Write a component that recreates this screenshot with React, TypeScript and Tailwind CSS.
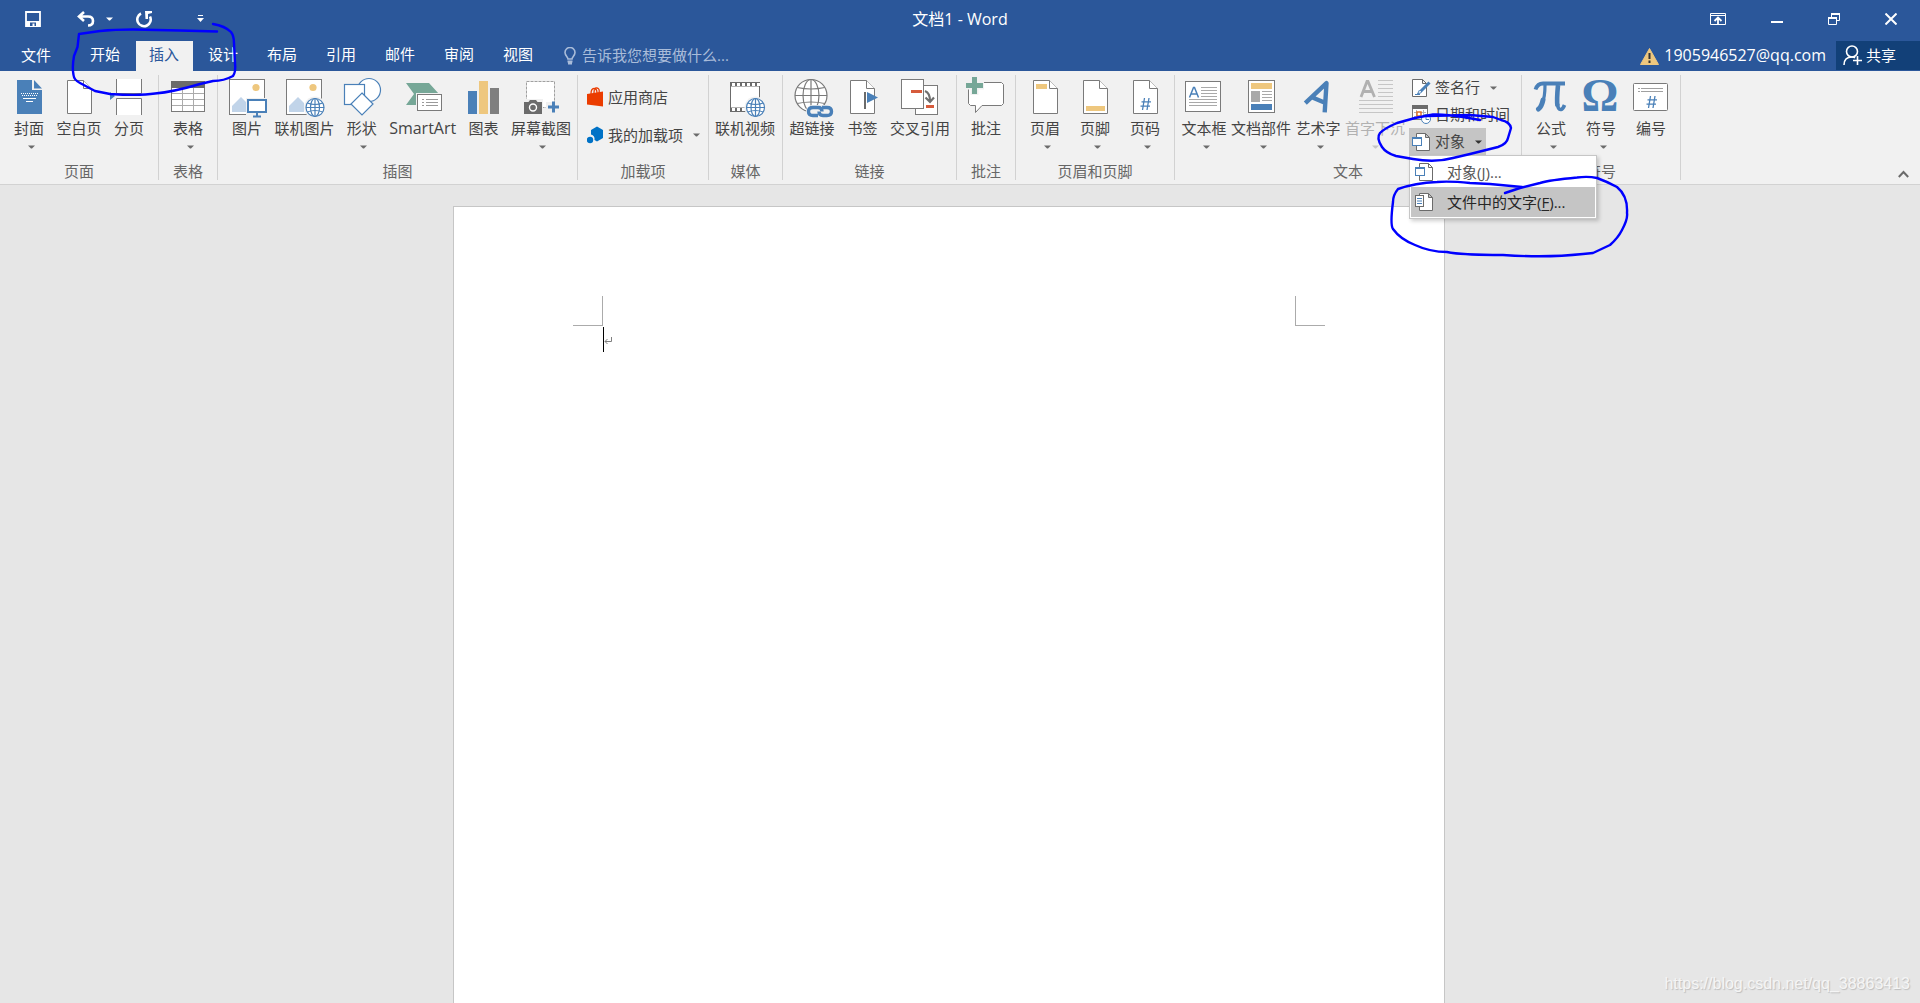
import React from "react";

const BLUE = "#4a80b8";
const GRAY = "#7a7a7a";
const GOLD = "#eec77e";

function Art({ children }: { children?: React.ReactNode }) {
  return (
    <svg viewBox="0 0 42 41" className="h-[41px] w-[42px] shrink-0 overflow-visible" fill="none" aria-hidden="true">
      {children}
    </svg>
  );
}

function Caret({ className = "text-[#6b6b6b]" }: { className?: string }) {
  return (
    <svg viewBox="0 0 7 4" className={`h-1 w-[7px] shrink-0 ${className}`} aria-hidden="true">
      <path d="M0 0.500H7L4 3.500H3Z" fill="currentColor" />
    </svg>
  );
}

function Page() {
  return (
    <g stroke={GRAY} fill="#fff">
      <path d="M9.500 3.500H25.500L33.500 11.500V36.500H9.500Z" />
      <path d="M25.500 3.500V11.500H33.500" />
    </g>
  );
}

function Globe({ x, y, r, color, bg }: { x: number; y: number; r: number; color: string; bg: string }) {
  const k = r * 0.5;
  const c = r * 0.86;
  return (
    <g stroke={color} strokeWidth="1.2">
      <circle cx={x} cy={y} r={r} fill={bg} />
      <ellipse cx={x} cy={y} rx={k} ry={r} />
      <path d={`M${x} ${y - r}V${y + r}M${x - r} ${y}H${x + r}`} />
      <path d={`M${x - c} ${y - k}Q${x} ${y - k + 3} ${x + c} ${y - k}M${x - c} ${y + k}Q${x} ${y + k - 3} ${x + c} ${y + k}`} />
    </g>
  );
}

function Picture() {
  return (
    <g>
      <rect x="3.5" y="2.500" width="35" height="35" fill="#fff" stroke={GRAY} />
      <circle cx="30" cy="10.500" r="3.600" fill={GOLD} />
      <path d="M6 35V29L15 20L21 26V35Z" fill="#c1d4e9" />
    </g>
  );
}

function Hash({ x, y }: { x: number; y: number }) {
  return (
    <path
      transform={`translate(${x} ${y})`}
      d="M4 0L2 12M8.500 0L6.500 12M1 3.800H10.500M0 8.200H9.500"
      stroke={BLUE}
      strokeWidth="1.300"
    />
  );
}

const art = {
  cover: (
    <Art>
      <path d="M9 3H24V13H34V37H9Z" fill={BLUE} />
      <path d="M26 3L34 11.500H26Z" fill={BLUE} />
      <path d="M13 16.500H30M14 18.500H30" stroke="#fff" strokeWidth="1.200" strokeDasharray="1 1" />
      <path d="M15 21.500H28M18 24.500H25" stroke="#fff" />
    </Art>
  ),
  blank: (
    <Art>
      <Page />
    </Art>
  ),
  breakPage: (
    <Art>
      <path d="M8.500 2V16.500H33.500V2M8.500 38V21.500H33.500V38" fill="#fff" stroke={GRAY} />
      <path d="M2 15L7 19L2 23Z" fill={BLUE} />
    </Art>
  ),
  table: (
    <Art>
      <rect x="4.500" y="4.500" width="33" height="30" fill="#fff" stroke={GRAY} />
      <path d="M5 16.500H37M5 22.500H37M5 28.500H37M15.500 10V34M26.500 10V34" stroke="#ababab" />
      <rect x="4" y="4" width="34" height="7" fill="#6b6b6b" />
    </Art>
  ),
  picture: (
    <Art>
      <Picture />
      <rect x="20" y="21" width="22" height="20" fill="#f1f1f1" />
      <rect x="22" y="23" width="18" height="12" fill="#fff" stroke={BLUE} strokeWidth="2" />
      <path d="M31 36V39M27 39.500H35" stroke={BLUE} strokeWidth="2" />
    </Art>
  ),
  onlinePicture: (
    <Art>
      <Picture />
      <circle cx="32" cy="30.500" r="11" fill="#f1f1f1" />
      <Globe x={32} y={30.5} r={9} color={BLUE} bg="#fff" />
    </Art>
  ),
  shapes: (
    <Art>
      <g fill="#fff" stroke={BLUE} strokeWidth="1.200">
        <circle cx="28" cy="13" r="11.500" />
        <rect x="3.500" y="7.500" width="20" height="20" />
        <path d="M21 16L32 27L21 38L10 27Z" />
      </g>
    </Art>
  ),
  smartArt: (
    <Art>
      <path d="M4 6H27L37 17L28 28H4L12 17Z" fill="#76a797" />
      <rect x="14" y="16" width="27" height="19" fill="#f1f1f1" />
      <rect x="15.500" y="17.500" width="24" height="16" fill="#fff" stroke={GRAY} />
      <path d="M20 22.500H22M24 22.500H36M20 25.500H22M24 25.500H36M20 28.500H22M24 28.500H36" stroke="#9a9a9a" />
    </Art>
  ),
  chart: (
    <Art>
      <rect x="5" y="14" width="9" height="23" fill={BLUE} />
      <rect x="16" y="4" width="9" height="33" fill={GOLD} />
      <rect x="27" y="11" width="9" height="26" fill="#7f7f7f" />
    </Art>
  ),
  screenshot: (
    <Art>
      <rect x="6.500" y="4.500" width="28" height="26" fill="#fff" stroke="#a0a0a0" strokeDasharray="3 1" />
      <path d="M3 22H23V31H26V25H41V38H3Z" fill="#f1f1f1" />
      <path d="M4 25H8.500L10 23H16L17.500 25H22V37H4Z" fill="#6b6b6b" />
      <circle cx="13" cy="30.500" r="3.500" fill="#6b6b6b" stroke="#fff" strokeWidth="1.400" />
      <path d="M28 30H39M33.500 24.500V35.500" stroke={BLUE} strokeWidth="3" />
    </Art>
  ),
  video: (
    <Art>
      <rect x="6.500" y="5.500" width="29" height="29" fill="#fff" stroke="#6b6b6b" />
      <path d="M6 7.500H36M6 32.500H36" stroke="#6b6b6b" strokeWidth="4" />
      <path d="M8 7.500H36M8 32.500H36" stroke="#fff" strokeWidth="3" strokeDasharray="3 2" />
      <circle cx="31.500" cy="30.500" r="11" fill="#f1f1f1" />
      <Globe x={31.5} y={30.5} r={9} color={BLUE} bg="#fff" />
    </Art>
  ),
  link: (
    <Art>
      <Globe x={20} y={18.5} r={16} color={GRAY} bg="#fff" />
      <rect x="15" y="28" width="28" height="14" rx="6" fill="#f1f1f1" />
      <path d="M27 38.500H22Q17.500 38.500 17.500 34.500T22 30.500H27Q31 30.500 31 34.500" stroke={BLUE} strokeWidth="3.400" />
      <path d="M31 30.500H36Q40.500 30.500 40.500 34.500T36 38.500H32Q28 38.500 28 34.500" stroke={BLUE} strokeWidth="3.400" />
    </Art>
  ),
  bookmark: (
    <Art>
      <Page />
      <path d="M24 15V32" stroke="#6b6b6b" strokeWidth="2" />
      <path d="M26 15L37 20.500L26 26Z" fill={BLUE} />
    </Art>
  ),
  crossRef: (
    <Art>
      <rect x="16.500" y="8.500" width="22" height="29" fill="#fff" stroke={GRAY} />
      <rect x="2.500" y="2.500" width="22" height="29" fill="#fff" stroke={GRAY} />
      <path d="M12 14.500H23M27 29.500H35" stroke="#d65b3c" strokeWidth="3" />
      <path d="M26 14Q31 16 31 24M26.500 20.500L31 25L35 20.500" stroke="#6f6f6f" strokeWidth="2.200" />
    </Art>
  ),
  comment: (
    <Art>
      <path d="M5.500 5.500H36.500L38.500 7.500V26.500L36.500 28.500H17L10.500 35.500V28.500H5.500L3.500 26.500V7.500Z" fill="#fff" stroke={GRAY} />
      <path d="M0 8.500H19M9.500 -1V18" stroke="#f1f1f1" strokeWidth="8" />
      <path d="M1 8.500H18M9.500 0V17" stroke="#76a797" strokeWidth="5" />
    </Art>
  ),
  header: (
    <Art>
      <Page />
      <rect x="12" y="7" width="11" height="5" fill={GOLD} />
    </Art>
  ),
  footer: (
    <Art>
      <Page />
      <rect x="12" y="29" width="19" height="5" fill={GOLD} />
    </Art>
  ),
  pageNumber: (
    <Art>
      <Page />
      <Hash x={16.5} y={21} />
    </Art>
  ),
  textBox: (
    <Art>
      <rect x="2.500" y="4.500" width="35" height="30" fill="#fff" stroke={GRAY} />
      <path d="M6.500 20.500L10.500 10.500H11.500L15.500 20.500M8 17H14" stroke={BLUE} strokeWidth="1.500" />
      <path d="M18 10.500H34M18 13.500H34M18 16.500H34M18 19.500H34M6 22.500H34M6 25.500H34M6 28.500H34" stroke="#a9a9a9" />
    </Art>
  ),
  parts: (
    <Art>
      <rect x="8.500" y="3.500" width="26" height="32" fill="#fff" stroke={GRAY} />
      <rect x="11" y="6" width="21" height="6" fill={GOLD} />
      <rect x="11" y="14" width="9" height="11" fill="#a9a9a9" />
      <path d="M22 14.500H32M22 17.500H32M22 20.500H32M22 23.500H32" stroke="#a9a9a9" />
      <rect x="11" y="27" width="21" height="6" fill={BLUE} />
    </Art>
  ),
  wordArt: (
    <Art>
      <path d="M8.300 26.200L29.500 6.200L27.700 35.300M15.500 20.500L28.500 26" stroke={BLUE} strokeWidth="4.400" strokeLinejoin="round" />
    </Art>
  ),
  dropCap: (
    <Art>
      <path d="M7 20L13 4.500H14L20.500 20M9.500 14.500H18.500" stroke="#b1b1b1" strokeWidth="2.800" />
      <path d="M24 3.500H39M24 7.500H39M24 11.500H39M24 15.500H39M24 19.500H39M5 23.500H39M5 27.500H39M5 31.500H39M5 35.500H39" stroke="#c6c6c6" />
    </Art>
  ),
  pi: (
    <Art>
      <path d="M5.500 12.500Q7.500 6.500 13 6.500H35" stroke={BLUE} strokeWidth="3.800" />
      <path d="M15 8Q15 20 12.500 25" stroke={BLUE} strokeWidth="3.200" />
      <path d="M13 23Q11.500 30 8.500 32" stroke={BLUE} strokeWidth="5" strokeLinecap="round" />
      <path d="M28 8Q26.500 24 27.500 29" stroke={BLUE} strokeWidth="4.600" />
      <path d="M27.500 27Q28 33 31 32.500Q33 32 34.500 28" stroke={BLUE} strokeWidth="3.600" />
    </Art>
  ),
  omega: (
    <Art>
      <text x="20" y="34" textAnchor="middle" fill={BLUE} className="font-['Liberation_Serif',serif] text-[46px] font-bold">
        Ω
      </text>
    </Art>
  ),
  numbering: (
    <Art>
      <rect x="3.500" y="6.500" width="34" height="27" rx="1" fill="#fff" stroke={GRAY} />
      <path d="M8 11.500H10M11 11.500H33M8 14.500H10M11 14.500H33" stroke="#a0a0a0" />
      <Hash x={16.5} y={19} />
    </Art>
  ),
};

type ToolProps = { icon: React.ReactNode; label: string; menu?: boolean; disabled?: boolean; latin?: boolean };

function Tool({ icon, label, menu, disabled, latin }: ToolProps) {
  return (
    <button
      type="button"
      disabled={disabled}
      className="flex h-20 min-w-[50px] flex-col items-center px-0.5 whitespace-nowrap text-[#444444] hover:bg-[#c5c5c5] disabled:text-[#b1b1b1]"
    >
      {icon}
      <span className={latin ? "text-[16px] leading-5" : "text-[15px] leading-5"}>{label}</span>
      {menu && <Caret className={disabled ? "mt-[7px] text-[#c6c6c6]" : "mt-[7px] ml-1 text-[#6b6b6b]"} />}
    </button>
  );
}

function Group({ title, className, children }: { title: string; className: string; children: React.ReactNode }) {
  return (
    <section aria-label={title} className={`flex h-[105px] shrink-0 flex-col border-r border-[#d2d2d2] px-1 ${className}`}>
      <div className="flex h-20 shrink-0 justify-between pt-0.5">{children}</div>
      <h2 className="mt-1.5 text-center text-[15px] leading-5 text-[#666666]">{title}</h2>
    </section>
  );
}

function PagePair({ children }: { children: React.ReactNode }) {
  return (
    <svg viewBox="0 0 18 18" className="h-[18px] w-[18px] shrink-0" aria-hidden="true">
      <path d="M4.500 0.500H13.500L17.500 4.500V17.500H4.500Z M13.500 0.500V4.500H17.500" stroke="#6b6b6b" fill="#fff" />
      {children}
    </svg>
  );
}

const objectIcon = (
  <PagePair>
    <rect x="0.500" y="4.500" width="9" height="8" stroke={BLUE} fill="#fff" />
    <path d="M0 5H10" stroke={BLUE} strokeWidth="2" />
  </PagePair>
);

const fileTextIcon = (
  <PagePair>
    <rect x="0.500" y="2.500" width="8" height="11" stroke="#6b6b6b" fill="#fff" />
    <path d="M2 5.500H7M2 8H7M2 10.500H7" stroke={BLUE} />
  </PagePair>
);

function MenuItem({ icon, label, accel, active }: { icon: React.ReactNode; label: string; accel: string; active?: boolean }) {
  return (
    <button
      type="button"
      role="menuitem"
      className={`flex h-[30px] w-full items-center gap-[14px] px-1 text-[15px] ${active ? "bg-[#c5c5c5] text-[#262626]" : "bg-white text-[#555555]"}`}
    >
      {icon}
      <span>
        {label}(<u className="underline-offset-2">{accel}</u>)...
      </span>
    </button>
  );
}

function TitleBar() {
  return (
    <header className="grid h-[41px] grid-cols-[1fr_auto_1fr] items-center pb-[3px] text-white">
      <div className="flex items-center pl-[25px]">
        <button type="button" aria-label="保存">
          <svg viewBox="0 0 16 16" className="h-4 w-4" fill="none">
            <path d="M1 1H15V15H1Z" stroke="currentColor" strokeWidth="1.800" />
            <path d="M1 10H15V15H1Z" fill="currentColor" />
            <path d="M5 11.500H11V15H9.500V12.500H7.500V15H5Z" fill="#2b579a" />
          </svg>
        </button>
        <button type="button" aria-label="撤消" className="ml-9 flex items-center gap-[11px]">
          <svg viewBox="0 0 18 16" className="h-4 w-[18px]" fill="none" stroke="currentColor" strokeWidth="2.600">
            <path d="M7 1L2 5.500L7 10M2.500 5.500H11Q16 5.500 16 10T11 14.500" />
          </svg>
          <Caret className="text-white" />
        </button>
        <button type="button" aria-label="重复" className="ml-[23px]">
          <svg viewBox="0 0 17 17" className="h-[17px] w-[17px]" fill="none">
            <path d="M5 2.500A6.700 6.700 0 1 0 14 5.500" stroke="currentColor" strokeWidth="2.600" />
            <path d="M9 0H16V2L12 3V8H9.500Z" fill="currentColor" />
          </svg>
        </button>
        <button type="button" aria-label="自定义快速访问工具栏" className="ml-11">
          <svg viewBox="0 0 7 8" className="h-2 w-[7px]" fill="currentColor">
            <path d="M1 0H6V1H1ZM0 3H7L3.500 7Z" />
          </svg>
        </button>
      </div>
      <h1 className="text-[16px] leading-5">文档1 - Word</h1>
      <div className="flex items-center justify-end gap-[45px] pr-[23px]">
        <button type="button" aria-label="功能区显示选项">
          <svg viewBox="0 0 16 12" className="h-3 w-4" fill="none" stroke="currentColor">
            <path d="M0.500 0.500H15.500V11.500H0.500ZM0 2.500H16" />
            <path d="M8 11V5M4.500 8L8 4.500L11.500 8" strokeWidth="1.800" />
          </svg>
        </button>
        <button type="button" aria-label="最小化">
          <svg viewBox="0 0 12 12" className="h-3 w-3" stroke="currentColor" strokeWidth="2">
            <path d="M0 9H12" />
          </svg>
        </button>
        <button type="button" aria-label="还原">
          <svg viewBox="0 0 12 12" className="h-3 w-3" fill="none" stroke="currentColor">
            <path d="M3.500 4V0.500H11.500V7.500H9M0.500 4.500H8.500V11.500H0.500Z" />
            <path d="M3 1H12M0 5H9" strokeWidth="2" />
          </svg>
        </button>
        <button type="button" aria-label="关闭">
          <svg viewBox="0 0 12 12" className="h-3 w-3" stroke="currentColor" strokeWidth="2">
            <path d="M0.500 0.500L11.500 11.500M11.500 0.500L0.500 11.500" />
          </svg>
        </button>
      </div>
    </header>
  );
}

const tabs = ["开始", "插入", "设计", "布局", "引用", "邮件", "审阅", "视图"];

function TabBar() {
  return (
    <nav className="flex h-[30px] items-stretch text-[15px] text-white">
      <button type="button" className="w-[73px] pr-px pb-0.5">
        文件
      </button>
      <div role="tablist" className="ml-1 flex gap-0.5">
        {tabs.map((t) => (
          <button
            key={t}
            type="button"
            role="tab"
            aria-selected={t === "插入"}
            className={`w-[57px] pr-px pb-[3px] ${t === "插入" ? "bg-[#f1f1f1] text-[#2b579a]" : ""}`}
          >
            {t}
          </button>
        ))}
      </div>
      <label className="ml-[17px] flex items-center gap-1.5 pb-px text-[#a9bcd9]">
        <svg viewBox="0 0 12 18" className="h-[18px] w-3" fill="none" stroke="currentColor" strokeWidth="1.600">
          <path d="M4 12C4 10 1 8.500 1 5.500A5 5 0 0 1 11 5.500C11 8.500 8 10 8 12Z" />
          <path d="M3.500 14.500H8.500M4 16.500H8" strokeWidth="1.800" />
        </svg>
        <input
          type="text"
          aria-label="操作说明搜索"
          placeholder="告诉我您想要做什么..."
          className="w-40 bg-transparent outline-none placeholder:text-[#a9bcd9]"
        />
      </label>
      <div className="ml-auto flex items-stretch">
        <button type="button" className="mr-[10px] flex items-center gap-[5px] pb-[3px] text-[16px]">
          <svg viewBox="0 0 19 17" className="mt-[3px] h-[17px] w-[19px]">
            <path d="M9.500 0.500L18.500 16.500H0.500Z" fill={GOLD} stroke={GOLD} strokeLinejoin="round" />
            <path d="M9.500 5V11M9.500 12.500V15" stroke="#333" strokeWidth="2" />
          </svg>
          1905946527@qq.com
        </button>
        <button type="button" className="mb-px flex w-[84px] items-center gap-1 bg-[#124078] pb-px pl-[7px]">
          <svg viewBox="0 0 19 20" className="h-5 w-[19px]" fill="none" stroke="currentColor" strokeWidth="1.600">
            <circle cx="9" cy="6.500" r="5.500" />
            <path d="M1 20Q1 12 9 12Q11 12 12 12.800M14.500 11V20M10 15.500H19" />
          </svg>
          共享
        </button>
      </div>
    </nav>
  );
}

function Ribbon() {
  return (
    <div className="relative z-10 flex h-[114px] border-b border-[#d2d2d2] bg-[#f1f1f1] pt-1">
      <Group title="页面" className="w-[159px]">
        <Tool icon={art.cover} label="封面" menu />
        <Tool icon={art.blank} label="空白页" />
        <Tool icon={art.breakPage} label="分页" />
      </Group>
      <Group title="表格" className="w-[59px]">
        <Tool icon={art.table} label="表格" menu />
      </Group>
      <Group title="插图" className="w-[360px]">
        <Tool icon={art.picture} label="图片" />
        <Tool icon={art.onlinePicture} label="联机图片" />
        <Tool icon={art.shapes} label="形状" menu />
        <Tool icon={art.smartArt} label="SmartArt" latin />
        <Tool icon={art.chart} label="图表" />
        <Tool icon={art.screenshot} label="屏幕截图" menu />
      </Group>
      <Group title="加载项" className="w-[131px]">
        <div className="flex flex-col gap-2 pt-[5px] pl-[5px] text-[15px] text-[#444444]">
          <button type="button" className="flex h-[30px] items-center gap-[5px]">
            <svg viewBox="0 0 16 20" className="h-5 w-4" fill="none">
              <path d="M4 7Q4 1.500 7 1.500T10 6M7 6Q7 0.500 10 1T12 6" stroke="#eb3c00" strokeWidth="1.300" />
              <path d="M0 7L16 4.500V19.500L0 17.500Z" fill="#eb3c00" />
            </svg>
            应用商店
          </button>
          <button type="button" className="flex h-[30px] items-center gap-[5px] whitespace-nowrap">
            <svg viewBox="0 0 16 18" className="h-[18px] w-4" fill="#0072c6">
              <path d="M10 0.500L16 4V12L10 15.500L7.500 14A5 5 0 0 0 4 8.500V4Z" />
              <circle cx="3" cy="14" r="3.200" />
            </svg>
            我的加载项
            <span className="ml-[5px] flex">
              <Caret />
            </span>
          </button>
        </div>
      </Group>
      <Group title="媒体" className="w-[74px]">
        <Tool icon={art.video} label="联机视频" />
      </Group>
      <Group title="链接" className="w-[174px]">
        <Tool icon={art.link} label="超链接" />
        <Tool icon={art.bookmark} label="书签" />
        <Tool icon={art.crossRef} label="交叉引用" />
      </Group>
      <Group title="批注" className="w-[59px]">
        <Tool icon={art.comment} label="批注" />
      </Group>
      <Group title="页眉和页脚" className="w-[159px]">
        <Tool icon={art.header} label="页眉" menu />
        <Tool icon={art.footer} label="页脚" menu />
        <Tool icon={art.pageNumber} label="页码" menu />
      </Group>
      <Group title="文本" className="w-[347px]">
        <Tool icon={art.textBox} label="文本框" menu />
        <Tool icon={art.parts} label="文档部件" menu />
        <Tool icon={art.wordArt} label="艺术字" menu />
        <Tool icon={art.dropCap} label="首字下沉" menu disabled />
        <div className="-mt-[3px] ml-0.5 flex flex-1 flex-col items-start text-[15px] whitespace-nowrap text-[#444444]">
          <button type="button" className="flex h-[27px] items-center gap-1 px-[3px]">
            <svg viewBox="0 0 19 18" className="h-[18px] w-[19px]" fill="#fff">
              <path d="M0.500 0.500H10.500L14.500 4.500V17.500H0.500Z M10.500 0.500V4.500H14.500" stroke="#6b6b6b" />
              <path d="M17.500 3.500L8.500 12.500" stroke={BLUE} strokeWidth="3" />
              <path d="M7.500 11L5.500 15L9.500 13.500M3 15.500H8" stroke={BLUE} />
            </svg>
            签名行
            <span className="ml-1.5 flex">
              <Caret />
            </span>
          </button>
          <button type="button" className="flex h-[27px] items-center gap-1 px-[3px]">
            <svg viewBox="0 0 19 19" className="h-[19px] w-[19px]" fill="#fff">
              <rect x="0.500" y="0.500" width="15" height="14" stroke={GRAY} />
              <path d="M0 2H16" stroke="#6b6b6b" strokeWidth="4" />
              <path d="M2 7.500H14M2 11.500H14M4.500 5V14M11.500 5V14" stroke="#b5b5b5" />
              <rect x="5" y="7" width="4" height="4" stroke="#dd6b1f" strokeWidth="1.400" />
              <circle cx="14" cy="14" r="4.500" stroke={BLUE} />
              <path d="M14 11V14.500H17" stroke={BLUE} fill="none" />
            </svg>
            日期和时间
          </button>
          <div className="relative">
            <button
              type="button"
              aria-haspopup="menu"
              aria-expanded="true"
              className="flex h-[27px] w-[77px] items-center gap-[5px] bg-[#c5c5c5] px-[3px]"
            >
              {objectIcon}
              对象
              <span className="ml-[5px] flex">
                <Caret className="text-[#333333]" />
              </span>
            </button>
            <div role="menu" className="absolute top-full left-0 w-[188px] border border-[#c6c6c6] bg-white p-px shadow-[2px_2px_4px_rgba(0,0,0,0.2)]">
              <MenuItem icon={objectIcon} label="对象" accel="J" />
              <MenuItem icon={fileTextIcon} label="文件中的文字" accel="F" active />
            </div>
          </div>
        </div>
      </Group>
      <Group title="符号" className="w-[159px]">
        <Tool icon={art.pi} label="公式" menu />
        <Tool icon={art.omega} label="符号" menu />
        <Tool icon={art.numbering} label="编号" />
      </Group>
      <button type="button" aria-label="折叠功能区" className="mr-[11px] mb-1.5 ml-auto self-end">
        <svg viewBox="0 0 11 8" className="h-2 w-[11px]" fill="none" stroke="#6b6b6b" strokeWidth="2">
          <path d="M0.800 7L5.500 2L10.200 7" />
        </svg>
      </button>
    </div>
  );
}

function Document() {
  return (
    <main className="flex flex-1 justify-center bg-[#e6e6e6] pt-[21px] pr-[22px]">
      <article className="w-full max-w-[992px] border border-b-0 border-[#c6c6c6] bg-white px-[119px] pt-[89px]">
        <div className="flex justify-between">
          <div className="h-[30px] w-[30px] border-r border-b border-[#ababab]" />
          <div className="h-[30px] w-[30px] border-b border-l border-[#ababab]" />
        </div>
        <div className="ml-[30px] flex items-center pt-px">
          <span className="h-[25px] w-px bg-black" />
          <svg viewBox="0 0 8 7" className="mt-0.5 h-[7px] w-2" fill="none" stroke="#7f7f7f">
            <path d="M7.500 0V4.500H1M3.500 2L1 4.500L3.500 7" />
          </svg>
        </div>
      </article>
    </main>
  );
}

function PenMarks() {
  return (
    <svg
      viewBox="0 0 1920 300"
      className="pointer-events-none absolute top-0 left-0 z-20 h-[300px] w-[1920px]"
      fill="none"
      stroke="#0000ff"
      strokeWidth="2.400"
      strokeLinecap="round"
      strokeLinejoin="round"
      aria-hidden="true"
    >
      <path d="M217 31.500L180 30.500L133 29.500Q115 29.500 100 31L79 34L77.500 47L74 56Q72 68 73.500 75Q74 80 80 83L95 91L110 94Q140 96 155 93.500Q173 92 200 84L213 81Q224 81 233 76Q236 72 235 63L234 43Q234 36 231 32Q225 26 213 24" />
      <path d="M1480 120L1463 117Q1445 114 1433 114.500L1415 118L1397 123Q1385 128 1380 133Q1376 138 1382 147Q1386 153 1396 156L1413 159Q1435 163 1453 158L1470 154L1498 147Q1507 144 1508 138L1511 128Q1510 122 1501 120L1493 117L1470 115L1427 116" />
      <path d="M1522 187L1490 184L1470 183Q1450 181 1437 182Q1415 183 1398 189Q1393 195 1393 202Q1390 225 1393 229Q1400 239 1415 245Q1430 252 1447 252Q1460 255 1503 255Q1547 258 1583 254L1593 253L1610 245Q1618 238 1622 230Q1628 219 1627 213Q1628 196 1617 187Q1608 182 1597 178Q1588 176 1577 177.500Q1550 180 1540 183L1520 188L1505 193" />
    </svg>
  );
}

export default function App() {
  return (
    <div className="relative flex min-h-screen flex-col overflow-hidden bg-[#2b579a] font-['Open_Sans','Noto_Sans_CJK_SC',sans-serif]">
      <TitleBar />
      <TabBar />
      <Ribbon />
      <Document />
      <PenMarks />
      <p className="absolute right-[10px] bottom-[7px] font-['Liberation_Sans',sans-serif] text-[16px] leading-6 text-[#f5f5f5] [text-shadow:1px_1px_1px_#bdbdbd]">
        https://blog.csdn.net/qq_38863413
      </p>
    </div>
  );
}
